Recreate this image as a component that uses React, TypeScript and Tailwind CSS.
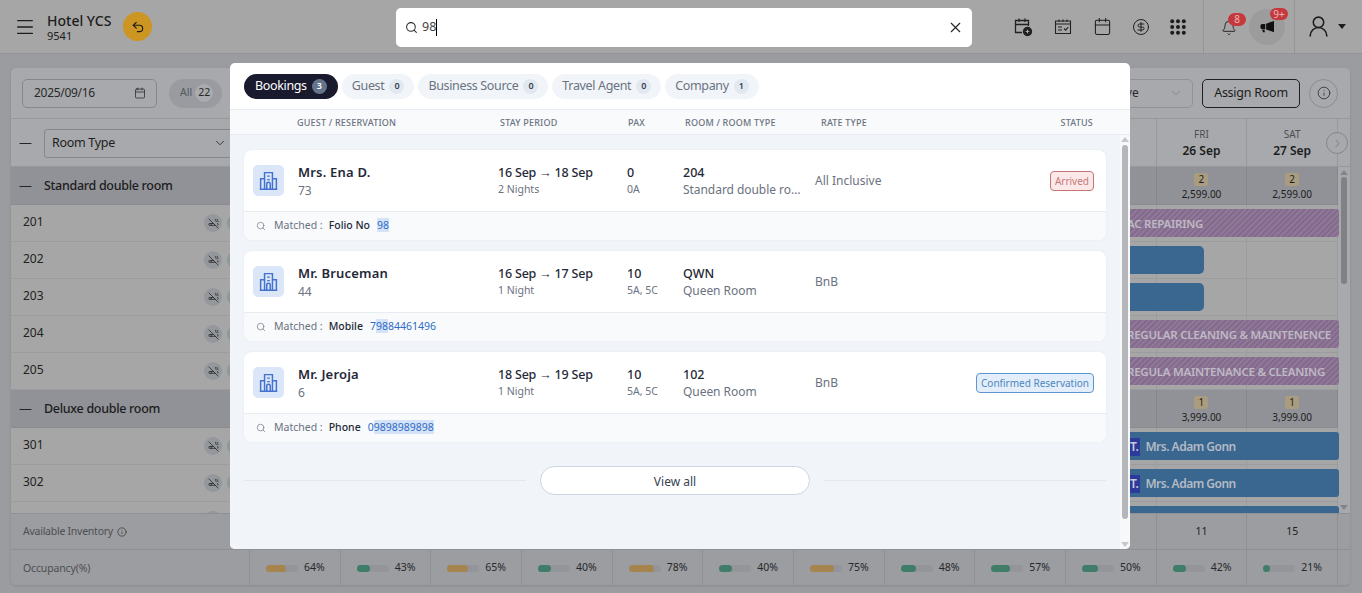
import {
  Calendar,
  ChevronDown,
  ChevronRight,
  CigaretteOff,
  CircleDollarSign,
  Bell,
  Info,
  Menu,
  Minus,
  Search,
  Undo2,
  UserRound,
  X,
} from 'lucide-react';

// only the last columns of the planner show beside the search panel
const days = [
  ['', ''], ['', ''], ['', ''], ['', ''], ['', ''], ['', ''],
  ['', ''], ['', ''], ['', ''], ['', ''], ['FRI', '26 Sep'], ['SAT', '27 Sep'],
];
const occupancy = [64, 43, 65, 40, 78, 40, 75, 48, 57, 50, 42, 21];

const tabs = [
  { label: 'Bookings', count: 3 },
  { label: 'Guest', count: 0 },
  { label: 'Business Source', count: 0 },
  { label: 'Travel Agent', count: 0 },
  { label: 'Company', count: 1 },
];

const bookings = [
  {
    name: 'Mrs. Ena D.', id: '73', stay: '16 Sep → 18 Sep', nights: '2 Nights', pax: '0', paxSub: '0A',
    room: '204', roomType: 'Standard double room', rate: 'All Inclusive', status: 'arrived',
    field: 'Folio No', before: '', hit: '98', after: '',
  },
  {
    name: 'Mr. Bruceman', id: '44', stay: '16 Sep → 17 Sep', nights: '1 Night', pax: '10', paxSub: '5A, 5C',
    room: 'QWN', roomType: 'Queen Room', rate: 'BnB', status: '',
    field: 'Mobile', before: '7', hit: '98', after: '84461496',
  },
  {
    name: 'Mr. Jeroja', id: '6', stay: '18 Sep → 19 Sep', nights: '1 Night', pax: '10', paxSub: '5A, 5C',
    room: '102', roomType: 'Queen Room', rate: 'BnB', status: 'confirmed',
    field: 'Phone', before: '0', hit: '9898989898', after: '',
  },
];

function CalendarPlusIcon() {
  return (
    <svg width="20" height="20" viewBox="0 0 20 20" fill="none" stroke="#222" strokeWidth="1.3">
      <path d="M9 15.5H2.5V3.5h13V9M2.5 7.5h13M6 1.5v3.5M12 1.5v3.5" />
      <circle cx="14.5" cy="14.5" r="4" fill="#222" />
      <path d="M12.7 14.5h3.6M14.5 12.7v3.6" stroke="#a6a6a6" strokeWidth="1" />
    </svg>
  );
}

function CalendarCheckIcon() {
  return (
    <svg width="20" height="20" viewBox="0 0 20 20" fill="none" stroke="#222" strokeWidth="1.1">
      <path d="M2.5 4h15v12.5h-15zM2.5 7h15M6 2.5V5M10 2.5V5M14 2.5V5" />
      <path d="M5 10h4M5 13h4M11 11.5l1.6 1.6 2.6-3" />
    </svg>
  );
}

function GridDotsIcon() {
  return (
    <svg width="16" height="16" viewBox="0 0 16 16" fill="#1c1c1c">
      {[2.2, 8, 13.8].map((y) =>
        [2.2, 8, 13.8].map((x) => <circle key={`${x}-${y}`} cx={x} cy={y} r="2" />),
      )}
    </svg>
  );
}

function MegaphoneIcon() {
  return (
    <svg width="16" height="14" viewBox="0 0 18 16" fill="#111">
      <path d="M17 1v13L8 10.8V4.2zM7 4.5v6H3.5A2.2 2.2 0 0 1 1.5 8.5v-2a2.2 2.2 0 0 1 2-2z" />
      <path d="M3.5 11h2.6l.5 3H4.4z" />
    </svg>
  );
}

function HotelIcon() {
  return (
    <svg width="21" height="21" viewBox="0 0 24 24" fill="none" stroke="#4472cf" strokeWidth="1.7">
      <path d="M7.5 22V3h9v19M7.5 10H3v12M16.5 10H21v12M2 22h20" />
      <path d="M10.5 7h3M10.5 11h3M10 22v-6a2 2 0 0 1 4 0v6" />
    </svg>
  );
}

function Badge({ children, className }: { children: string; className: string }) {
  return (
    <span className={`flex items-center justify-center rounded-full bg-[#c5393d] text-[10px] leading-none text-[#e6b8b8] ${className}`}>
      {children}
    </span>
  );
}

function Header() {
  return (
    <header className="flex h-[54px] shrink-0 items-stretch border-b border-[#959595] bg-[#a6a6a6] text-[#1d1d1d]">
      <div className="flex items-center pl-[14px]">
        <Menu size={22} strokeWidth={1.4} />
        <div className="ml-[11px] flex flex-col">
          <span className="text-[14px] leading-[17px] font-medium">Hotel YCS</span>
          <span className="text-[11px] leading-[13px]">9541</span>
        </div>
        <button className="ml-[12px] flex h-[29px] w-[29px] items-center justify-center rounded-full bg-[#cd9521]">
          <Undo2 size={14} strokeWidth={2} />
        </button>
      </div>
      <div className="flex-1" />
      <div className="flex items-center gap-[20px] pr-[17px]">
        <CalendarPlusIcon />
        <CalendarCheckIcon />
        <Calendar size={19} strokeWidth={1.3} />
        <CircleDollarSign size={18} strokeWidth={1.3} />
        <GridDotsIcon />
      </div>
      <div className="flex w-[92px] items-center border-x border-[#959595] pl-[17px]">
        <span className="relative mt-[2px]">
          <Bell size={16} strokeWidth={1.4} />
          <Badge className="absolute -top-[7px] left-[7px] h-[13px] w-[18px]">8</Badge>
        </span>
        <span className="relative ml-[12px] flex h-[36px] w-[36px] items-center justify-center rounded-full bg-[#9c9c9c]">
          <MegaphoneIcon />
          <Badge className="absolute -top-[1px] left-[21px] h-[12px] w-[18px]">9+</Badge>
        </span>
      </div>
      <div className="flex w-[67px] items-center pl-[11px]">
        <UserRound size={25} strokeWidth={1.5} />
        <span className="ml-[7px] h-0 w-0 border-x-[4px] border-t-[5px] border-x-transparent border-t-[#1d1d1d]" />
      </div>
    </header>
  );
}

function Toolbar() {
  return (
    <div className="flex h-[51px] items-center border-b border-[#96989b] pl-[11px] pr-[12px]">
      <div className="flex h-[29px] w-[135px] items-center justify-between rounded-[5px] border border-[#85878b] pl-[11px] pr-[10px] text-[12px] tracking-[-0.3px] text-[#2a2a2a]">
        2025/09/16
        <Calendar size={12} strokeWidth={1.5} />
      </div>
      <div className="ml-[12px] flex h-[29px] items-center gap-[3px] rounded-full bg-[#999ba0] pl-[11px] pr-[9px] text-[10.5px] text-[#55585e]">
        All
        <span className="flex h-[18px] w-[18px] items-center justify-center rounded-full bg-[#a9abae] text-[#2a2a2a]">22</span>
      </div>
      <div className="flex-1" />
      <div className="flex h-[29px] w-[120px] items-center justify-between rounded-[5px] border border-[#909296] pl-[31px] pr-[9px] text-[12px] text-[#2a2a2a]">
        Active
        <ChevronDown size={14} strokeWidth={1} className="text-[#6b6d70]" />
      </div>
      <button className="ml-[9px] h-[29px] w-[98px] rounded-[5px] border border-[#1f1f1f] text-[12.5px] tracking-[-0.25px] text-[#1d1d1d]">
        Assign Room
      </button>
      <button className="ml-[9px] flex h-[29px] w-[29px] items-center justify-center rounded-full border border-[#8a8c90] text-[#2f2f2f]">
        <Info size={14} strokeWidth={1.4} />
      </button>
    </div>
  );
}

function RoomRow({ room, bar }: { room?: string; bar?: React.ReactNode }) {
  return (
    <div className="flex h-[37px] border-b border-[#9a9c9f] bg-[#a6a6a6]">
      <div className="flex w-[239px] shrink-0 items-center border-r border-[#9a9c9f] pl-[12px] pr-[4px] text-[12px] text-[#222]">
        <span className="mb-[2px]">{room}</span>
        <span className="ml-auto flex h-[18px] w-[18px] items-center justify-center rounded-full bg-[#94979c]">
          <CigaretteOff size={11} strokeWidth={1.6} />
        </span>
        <span className="ml-[5px] h-[18px] w-[18px] rounded-full bg-[#8a9c92]" />
      </div>
      <div className="grid flex-1 grid-cols-12">
        {days.map((_, i) => (
          <div key={i} className="border-r border-[#9a9c9f]" style={{ gridColumn: i + 1, gridRow: 1 }} />
        ))}
        {bar}
      </div>
    </div>
  );
}

function StripeBar({ label }: { label: string }) {
  return (
    <div className="col-span-3 col-start-10 row-start-1 my-[4px] mr-[-1px] flex items-center overflow-hidden rounded-[3px] bg-[repeating-linear-gradient(135deg,#846a8d_0,#846a8d_2px,#8f7798_2px,#8f7798_4px)] pt-px pl-[61px] text-[11.5px] font-semibold tracking-[-0.25px] whitespace-nowrap text-[#bfb9c4]">
      {label}
    </div>
  );
}

function BlueBar({ label, wide }: { label?: string; wide?: boolean }) {
  if (wide) {
    return <div className="col-span-3 col-start-10 row-start-1 my-[4px] mr-[-1px] rounded-[3px] bg-[#39678f]" />;
  }
  if (!label) {
    return <div className="col-span-2 col-start-10 row-start-1 my-[4px] mr-[43px] rounded-[5px] bg-[#39678f]" />;
  }
  return (
    <div className="col-span-3 col-start-10 row-start-1 my-[4px] mr-[-1px] flex items-center rounded-[3px] bg-[#39678f] pt-px pl-[62px] text-[12px] font-semibold tracking-[-0.5px] text-[#b5bac4]">
      <span className="mr-[5px] bg-[#2c3a9c] px-[2px] text-[#c9cbd8]">T.</span>
      {label}
    </div>
  );
}

function BandRow({ label, qty, rate }: { label: string; qty: string; rate: string }) {
  return (
    <div className="flex h-[38px] border-b border-[#8a8c90] bg-[#909297]">
      <div className="flex w-[239px] shrink-0 items-center border-r border-[#85878b] pt-[2px] pl-[5px] text-[12.5px] font-medium tracking-[-0.3px] text-[#1d1d1d]">
        <Minus size={19} strokeWidth={1.2} />
        <span className="ml-[9px]">{label}</span>
      </div>
      <div className="grid flex-1 grid-cols-12">
        {days.map(([day], i) => (
          <div key={i} className="flex flex-col items-center justify-center border-r border-[#85878b] pt-[3px] text-[10px] leading-[13px] text-[#1d1d1d]">
            {day && <span className="mb-[2px] w-[14px] rounded-[2px] bg-[#aa9c7e] text-center">{qty}</span>}
            {day && rate}
          </div>
        ))}
      </div>
    </div>
  );
}

function RoomGrid() {
  return (
    <div className="flex h-[346px] overflow-hidden">
      <div className="min-w-0 flex-1">
        <BandRow label="Standard double room" qty="2" rate="2,599.00" />
        <RoomRow room="201" bar={<StripeBar label="AC REPAIRING" />} />
        <RoomRow room="202" bar={<BlueBar />} />
        <RoomRow room="203" bar={<BlueBar />} />
        <RoomRow room="204" bar={<StripeBar label="REGULAR CLEANING & MAINTENENCE" />} />
        <RoomRow room="205" bar={<StripeBar label="REGULA MAINTENANCE & CLEANING" />} />
        <BandRow label="Deluxe double room" qty="1" rate="3,999.00" />
        <RoomRow room="301" bar={<BlueBar label="Mrs. Adam Gonn" />} />
        <RoomRow room="302" bar={<BlueBar label="Mrs. Adam Gonn" />} />
        <RoomRow bar={<BlueBar wide />} />
      </div>
      <ScrollBar thumb="h-[107px]" />
    </div>
  );
}

function ScrollBar({ thumb }: { thumb: string }) {
  return (
    <div className="flex w-[12px] shrink-0 flex-col items-center pt-[3px] pb-[3px]">
      <span className="h-0 w-0 border-x-[4px] border-b-[5px] border-x-transparent border-b-[#828487]" />
      <span className={`mt-[2px] w-[6px] rounded-full bg-[#7f8184] ${thumb}`} />
      <span className="flex-1" />
      <span className="h-0 w-0 border-x-[4px] border-t-[5px] border-x-transparent border-t-[#828487]" />
    </div>
  );
}

function Planner() {
  return (
    <section className="mt-[14px] mr-[12px] ml-[11px] h-[517px] overflow-hidden rounded-[5px] bg-[#a7a9ac] shadow-sm">
      <Toolbar />
      <div className="flex h-[48px] border-b border-[#96989b]">
        <div className="flex w-[239px] shrink-0 items-center border-r border-[#96989b] pt-[1px] pl-[5px] text-[#1d1d1d]">
          <Minus size={19} strokeWidth={1.2} />
          <div className="ml-[9px] mr-[14px] flex h-[29px] flex-1 items-center justify-between rounded-[3px] border border-[#85878b] pl-[7px] pr-[7px] text-[12.5px] tracking-[-0.3px]">
            Room Type
            <ChevronDown size={14} strokeWidth={1.4} />
          </div>
        </div>
        <div className="grid flex-1 grid-cols-12">
          {days.map(([day, date], i) => (
            <div key={i} className="flex flex-col items-center justify-center border-r border-[#96989b] pt-px">
              <span className="text-[10px] leading-[14px] text-[#4d4f52]">{day}</span>
              <span className="text-[12px] leading-[19px] font-semibold text-[#1d1d1d]">{date}</span>
            </div>
          ))}
        </div>
        <div className="relative w-[12px] shrink-0">
          <span className="absolute top-[13px] -left-[12px] flex h-[22px] w-[22px] items-center justify-center rounded-full border border-[#85878b] bg-[#a7a9ac] text-[#6d6f72]">
            <ChevronRight size={13} strokeWidth={1.4} />
          </span>
        </div>
      </div>
      <RoomGrid />
      <div className="flex h-[36px] border-t border-[#8e9094] bg-[#9b9da1]">
        <div className="flex w-[239px] shrink-0 items-center gap-[4px] border-r border-[#8e9094] pl-[12px] text-[10.5px] tracking-[-0.25px] text-[#4d4f52]">
          Available Inventory
          <Info size={10} strokeWidth={1.6} className="text-[#2d2d2d]" />
        </div>
        <div className="grid flex-1 grid-cols-12 pr-0">
          {days.map((_, i) => (
            <div key={i} className="flex items-center justify-center border-r border-[#8e9094] text-[10.5px] text-[#1d1d1d]">
              {i === 10 ? '11' : i === 11 ? '15' : ''}
            </div>
          ))}
        </div>
        <div className="w-[12px] shrink-0" />
      </div>
      <div className="flex h-[36px] border-t border-[#8e9094] bg-[#9b9da1]">
        <div className="flex w-[239px] shrink-0 items-center border-r border-[#8e9094] pt-[2px] pl-[12px] text-[10.5px] tracking-[-0.15px] text-[#4d4f52]">
          Occupancy(%)
        </div>
        <div className="grid flex-1 grid-cols-12">
          {occupancy.map((pct, i) => (
            <div key={i} className="flex items-center gap-[6px] border-r border-[#8e9094] pt-px pl-[16px] text-[10.5px] text-[#26282b]">
              <span className="h-[7px] w-[32px] rounded-full bg-[#93959a]">
                <span
                  className={`block h-full rounded-full ${pct >= 60 ? 'bg-[#a5844e]' : 'bg-[#3f7d68]'}`}
                  style={{ width: `${Math.max(pct, 21)}%` }}
                />
              </span>
              {pct}%
            </div>
          ))}
        </div>
        <div className="w-[12px] shrink-0" />
      </div>
    </section>
  );
}

function SearchBox() {
  return (
    <div className="absolute top-[8px] left-[396px] flex h-[39px] w-[576px] items-center rounded-[5px] bg-white pl-[9px] pr-[8px]">
      <Search size={13} strokeWidth={2} className="text-[#2f2f2f]" />
      <span className="ml-[4px] text-[12.5px] text-[#444]">98</span>
      <span className="h-[17px] w-px bg-black" />
      <span className="flex-1" />
      <X size={17} strokeWidth={1.5} className="text-[#222]" />
    </div>
  );
}

function Tabs() {
  return (
    <div className="flex h-[47px] items-center gap-[4px] border-b border-[#e8ecf1] pl-[14px]">
      {tabs.map((tab, i) => (
        <div
          key={tab.label}
          className={`flex h-[25px] items-center gap-[5px] rounded-full text-[12.5px] tracking-[-0.35px] ${
            i === 0 ? 'bg-[#1a1a2e] px-[11px] text-white' : 'bg-[#f1f5f9] px-[10px] text-[#6b7280]'
          }`}
        >
          <span className="pt-px">{tab.label}</span>
          <span
            className={`flex h-[15px] min-w-[15px] items-center justify-center rounded-full text-[9px] font-semibold ${
              i === 0 ? 'bg-[#64748b] text-white' : 'bg-[#e2e8f0] text-[#374151]'
            }`}
          >
            {tab.count}
          </span>
        </div>
      ))}
    </div>
  );
}

function TableHead() {
  return (
    <div className="flex h-[25px] items-center border-b border-[#e8ecf1] bg-[#f8fafc] pt-px text-[9px] font-medium tracking-[0.2px] text-[#6b7280]">
      <span className="ml-[67px] w-[203px]">GUEST / RESERVATION</span>
      <span className="w-[128px]">STAY PERIOD</span>
      <span className="w-[57px]">PAX</span>
      <span className="w-[136px]">ROOM / ROOM TYPE</span>
      <span>RATE TYPE</span>
      <span className="ml-auto mr-[37px]">STATUS</span>
    </div>
  );
}

function StatusPill({ status }: { status: string }) {
  if (status === 'arrived') {
    return (
      <span className="rounded-[4px] border border-[#c47474] bg-[#fbe9e9] px-[4px] py-[1px] text-[10px] leading-[16px] text-[#c67a7a]">
        Arrived
      </span>
    );
  }
  if (status === 'confirmed') {
    return (
      <span className="rounded-[4px] border border-[#5f96cd] bg-[#e3eefa] px-[4px] py-[1px] text-[10px] leading-[16px] text-[#4d87c0]">
        Confirmed Reservation
      </span>
    );
  }
  return null;
}

function BookingCard({ booking }: { booking: (typeof bookings)[number] }) {
  return (
    <article className="h-[90px] overflow-hidden rounded-[8px] bg-white shadow-[0_0_3px_rgba(15,23,42,0.05)]">
      <div className="flex h-[62px] items-center border-b border-[#e8ecf1] pl-[9px] pr-[12px]">
        <span className="flex h-[31px] w-[31px] shrink-0 items-center justify-center rounded-[5px] bg-[#dbe7f8]">
          <HotelIcon />
        </span>
        <div className="ml-[14px] w-[200px] shrink-0 pt-[2px]">
          <p className="text-[13px] leading-[18px] font-semibold tracking-[0.2px] text-[#1f2937]">{booking.name}</p>
          <p className="mt-[1px] text-[12px] leading-[18px] text-[#6b7280]">{booking.id}</p>
        </div>
        <div className="w-[129px] shrink-0">
          <p className="text-[12.5px] leading-[17px] font-medium tracking-[-0.2px] text-[#1f2937]">{booking.stay}</p>
          <p className="text-[10.5px] leading-[16px] text-[#6b7280]">{booking.nights}</p>
        </div>
        <div className="w-[56px] shrink-0">
          <p className="text-[12.5px] leading-[17px] font-medium text-[#1f2937]">{booking.pax}</p>
          <p className="text-[10.5px] leading-[16px] text-[#6b7280]">{booking.paxSub}</p>
        </div>
        <div className="w-[132px] shrink-0 pr-[14px]">
          <p className="text-[12.5px] leading-[17px] font-medium text-[#1f2937]">{booking.room}</p>
          <p className="truncate text-[12px] leading-[17px] tracking-[-0.05px] text-[#6b7280]">{booking.roomType}</p>
        </div>
        <p className="text-[12px] text-[#6b7280]">{booking.rate}</p>
        <span className="ml-auto flex">
          <StatusPill status={booking.status} />
        </span>
      </div>
      <div className="flex h-[28px] items-center bg-[#f8fafc] pl-[12px] text-[10.5px]">
        <Search size={10} strokeWidth={1.6} className="text-[#6b7280]" />
        <span className="ml-[8px] text-[#6b7280]">Matched :</span>
        <span className="ml-[6px] font-medium text-[#1f2937]">{booking.field}</span>
        <span className="ml-[7px] text-[#2f6bc7]">
          {booking.before}
          <span className="bg-[#d5e3f7]">{booking.hit}</span>
          {booking.after}
        </span>
      </div>
    </article>
  );
}

function SearchResults() {
  return (
    <div className="absolute top-[63px] left-[230px] flex h-[486px] w-[900px] flex-col overflow-hidden rounded-[5px] bg-white">
      <Tabs />
      <TableHead />
      <div className="flex min-h-0 flex-1 bg-[#f1f5f9]">
        <div className="flex-1 pt-[15px] pl-[14px] pr-[14px]">
          <div className="flex flex-col gap-[11px]">
            {bookings.map((b) => (
              <BookingCard key={b.name} booking={b} />
            ))}
          </div>
          <div className="mt-[24px] flex items-center gap-[14px]">
            <span className="h-px flex-1 bg-[#e2e8f0]" />
            <button className="h-[29px] w-[270px] rounded-full border border-[#cbd5e1] bg-white pt-[2px] text-[12px] text-[#374151]">
              View all
            </button>
            <span className="h-px flex-1 bg-[#e2e8f0]" />
          </div>
        </div>
        <div className="flex w-[10px] flex-col items-center bg-[#f7f8fa] pt-[2px] pb-[2px]">
          <span className="h-0 w-0 border-x-[4px] border-b-[5px] border-x-transparent border-b-[#c5c7ca]" />
          <span className="mt-[3px] h-[374px] w-[6px] rounded-full bg-[#b4b6b9]" />
          <span className="flex-1" />
          <span className="h-0 w-0 border-x-[4px] border-t-[5px] border-x-transparent border-t-[#c5c7ca]" />
        </div>
      </div>
    </div>
  );
}

export default function App() {
  return (
    <div className="relative h-[593px] w-full overflow-hidden bg-[#9a9c9f] font-['Noto_Sans','Liberation_Sans',sans-serif]">
      <Header />
      <Planner />
      <SearchBox />
      <SearchResults />
    </div>
  );
}
